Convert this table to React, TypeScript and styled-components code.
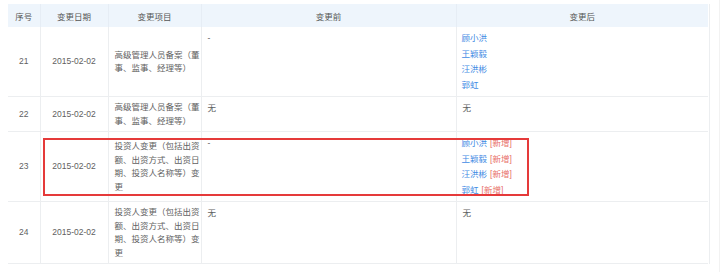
import React from "react";
import styled, { createGlobalStyle } from "styled-components";

type Person = { name: string; added?: boolean };

type Record = {
	no: number;
	date: string;
	item: string[];
	before: string;
	after: Person[] | string;
};

const records: Record[] = [
	{
		no: 21,
		date: "2015-02-02",
		item: ["高级管理人员备案（董", "事、监事、经理等）"],
		before: "-",
		after: [{ name: "顾小洪" }, { name: "王颖毅" }, { name: "汪洪彬" }, { name: "郭虹" }],
	},
	{
		no: 22,
		date: "2015-02-02",
		item: ["高级管理人员备案（董", "事、监事、经理等）"],
		before: "无",
		after: "无",
	},
	{
		no: 23,
		date: "2015-02-02",
		item: ["投资人变更（包括出资", "额、出资方式、出资日", "期、投资人名称等）变", "更"],
		before: "-",
		after: [
			{ name: "顾小洪", added: true },
			{ name: "王颖毅", added: true },
			{ name: "汪洪彬", added: true },
			{ name: "郭虹", added: true },
		],
	},
	{
		no: 24,
		date: "2015-02-02",
		item: ["投资人变更（包括出资", "额、出资方式、出资日", "期、投资人名称等）变", "更"],
		before: "无",
		after: "无",
	},
];

const App: React.FC = () => {
	return (
		<>
			<GlobalStyle />
			<Page>
				<TableWrap>
					<Table>
						<colgroup>
							<col style={{ width: 32 }} />
							<col style={{ width: 68 }} />
							<col style={{ width: 93 }} />
							<col style={{ width: 255 }} />
							<col />
						</colgroup>
						<thead>
							<tr>
								<Th>序号</Th>
								<Th>变更日期</Th>
								<Th>变更项目</Th>
								<Th>变更前</Th>
								<Th>变更后</Th>
							</tr>
						</thead>
						<tbody>
							{records.map((r) => (
								<tr key={r.no}>
									<Td $align="center" $valign="middle">
										{r.no}
									</Td>
									<Td $align="center" $valign="middle">
										{r.date}
									</Td>
									<Td $valign="middle">
										{r.item.map((line, i) => (
											<Line key={i}>{line}</Line>
										))}
									</Td>
									<Td>
										<Plain>{r.before}</Plain>
									</Td>
									<Td>
										{typeof r.after === "string" ? (
											<Plain>{r.after}</Plain>
										) : (
											r.after.map((p) => (
												<Name key={p.name}>
													<a href="#">{p.name}</a>
													{p.added && <Added>[新增]</Added>}
												</Name>
											))
										)}
									</Td>
								</tr>
							))}
						</tbody>
					</Table>
					{/* 标注框 */}
					<Highlight />
				</TableWrap>
			</Page>
		</>
	);
};

export default App;

/* ================= styled ================ */

const GlobalStyle = createGlobalStyle`
	html, body {
		margin: 0;
		background: #fff;
	}
	body {
		font-family: "Liberation Sans", "Noto Sans CJK SC", sans-serif;
		color: #616161;
	}
`;

const Page = styled.div`
	width: 720px;
	height: 272px;
	padding: 4px 0 0 8px;
	box-sizing: border-box;
	border-right: 1px solid #f2f2f2;
`;

const TableWrap = styled.div`
	position: relative;
	width: 701px;
	border-right: 1px solid #eceef0;
`;

const Table = styled.table`
	width: 700px;
	table-layout: fixed;
	border-collapse: collapse;
	font-size: 8.5px;
`;

const Th = styled.th`
	height: 23px;
	padding: 0;
	background: #eef5fc;
	color: #555;
	font-weight: normal;
	text-align: center;
	vertical-align: middle;
	border-left: 1px solid #e6edf5;
	&:first-child {
		border-left: none;
	}
`;

const Td = styled.td<{ $align?: "left" | "center"; $valign?: "top" | "middle" }>`
	padding: 4px 5px 3px;
	text-align: ${({ $align }) => $align || "left"};
	vertical-align: ${({ $valign }) => $valign || "top"};
	border-bottom: 1px solid #eceef0;
	border-left: 1px solid #eceef0;
	line-height: 13.5px;
	&:first-child {
		border-left: none;
	}
	&:nth-child(3) {
		padding-left: 6px;
	}
`;

const Line = styled.div`
	white-space: nowrap;
`;

const Plain = styled.div`
	line-height: 15.5px;
	padding-left: 1px;
`;

const Name = styled.div`
	line-height: 15.5px;
	white-space: nowrap;

	a {
		color: #3f8be4;
		text-decoration: none;
	}
`;

const Added = styled.span`
	margin-left: 3px;
	color: #e8706a;
`;

const Highlight = styled.div`
	position: absolute;
	left: 35px;
	top: 134px;
	width: 486px;
	height: 58px;
	border: 2px solid #e53a3a;
	box-sizing: border-box;
	pointer-events: none;
`;
